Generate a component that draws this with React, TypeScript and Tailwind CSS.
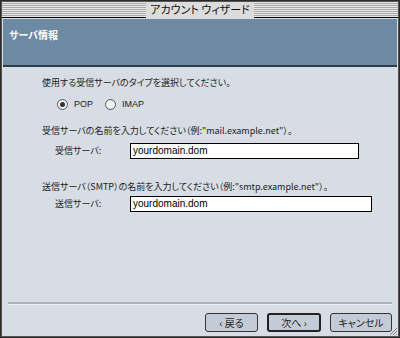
const jp = "font-['Noto_Sans_CJK_JP',_sans-serif] [font-feature-settings:'palt']";
const latin = "font-['Liberation_Sans',_'Noto_Sans_CJK_JP',_sans-serif]";

function Radio({ checked, label }: { checked?: boolean; label: string }) {
  return (
    <div className="flex items-center gap-[6px]">
      <span className="w-[11px] h-[11px] rounded-full border border-[#555] bg-[#eef1f4] flex items-center justify-center">
        {checked && <span className="w-[5px] h-[5px] rounded-full bg-[#333]" />}
      </span>
      <span className={`${latin} text-[9px] text-[#222]`}>{label}</span>
    </div>
  );
}

function Field({ label, value, width }: { label: string; value: string; width: string }) {
  return (
    <div className="flex items-center">
      <span className={`w-[88px] pl-[13px] text-[9px] text-[#222] ${jp}`}>{label}</span>
      <div className={`${width} h-[16px] bg-white border border-black flex items-center px-[2px]`}>
        <span className={`${latin} text-[10px] text-black leading-none`}>{value}</span>
      </div>
    </div>
  );
}

function Button({ label, width, primary }: { label: string; width: string; primary?: boolean }) {
  return (
    <button
      className={`${width} h-[19px] rounded-[3px] bg-[#c3ccd6] text-[10px] text-[#222] flex items-center justify-center ${jp} ${
        primary ? "border-2 border-[#222]" : "border border-[#333]"
      }`}
    >
      {label}
    </button>
  );
}

export default function App() {
  return (
    <div className="w-[400px] h-[338px] bg-[#2a2a2a] p-[1px] overflow-hidden">
      <div className="w-full h-full flex flex-col bg-[#d6dde5] border border-[#555]">
        {/* Title bar */}
        <div className="h-[16px] border-b border-black bg-[repeating-linear-gradient(to_bottom,#e6e6e6_0px,#e6e6e6_1px,#a9a9a9_1px,#a9a9a9_2px)] flex items-center justify-center px-[4px]">
          <span className={`bg-[#dcdcdc] px-[4px] h-[16px] flex items-center text-[11px] text-[#111] ${jp}`}>
            アカウント ウィザード
          </span>
        </div>

        {/* Header */}
        <div className="mx-[1px] mt-[1px] h-[48px] bg-[#6c8aa3] border-b-2 border-[#2f3d4a] pl-[6px] pt-[2px]">
          <span className={`text-[10px] font-bold text-white ${jp}`}>サーバ情報</span>
        </div>

        {/* Content */}
        <div className="flex-1 flex flex-col pl-[40px] pt-[9px]">
          <p className={`text-[9px] text-[#222] ${jp}`}>使用する受信サーバのタイプを選択してください。</p>
          <div className="flex items-center gap-[12px] pl-[15px] mt-[8px]">
            <Radio checked label="POP" />
            <Radio label="IMAP" />
          </div>
          <p className={`mt-[13px] text-[9px] text-[#222] ${jp}`}>
            受信サーバの名前を入力してください（例:"mail.example.net"）。
          </p>
          <div className="mt-[5px]">
            <Field label="受信サーバ:" value="yourdomain.dom" width="w-[229px]" />
          </div>
          <p className={`mt-[21px] text-[9px] text-[#222] ${jp}`}>
            送信サーバ（SMTP）の名前を入力してください（例:"smtp.example.net"）。
          </p>
          <div className="mt-[3px]">
            <Field label="送信サーバ:" value="yourdomain.dom" width="w-[242px]" />
          </div>
        </div>

        {/* Footer */}
        <div className="mx-[6px] border-t-2 border-[#aab2bb] border-b border-b-[#eef1f4]" />
        <div className="relative h-[31px] flex items-center justify-end gap-[9px] pr-[6px] pt-[3px]">
          <Button label="‹ 戻る" width="w-[53px]" />
          <Button label="次へ ›" width="w-[54px]" primary />
          <Button label="キャンセル" width="w-[62px]" />
          <svg className="absolute right-0 bottom-0" width="10" height="10" viewBox="0 0 10 10">
            <path d="M9 2 L2 9 M9 5 L5 9 M9 8 L8 9" stroke="#888" strokeWidth="1" />
          </svg>
        </div>
      </div>
    </div>
  );
}
